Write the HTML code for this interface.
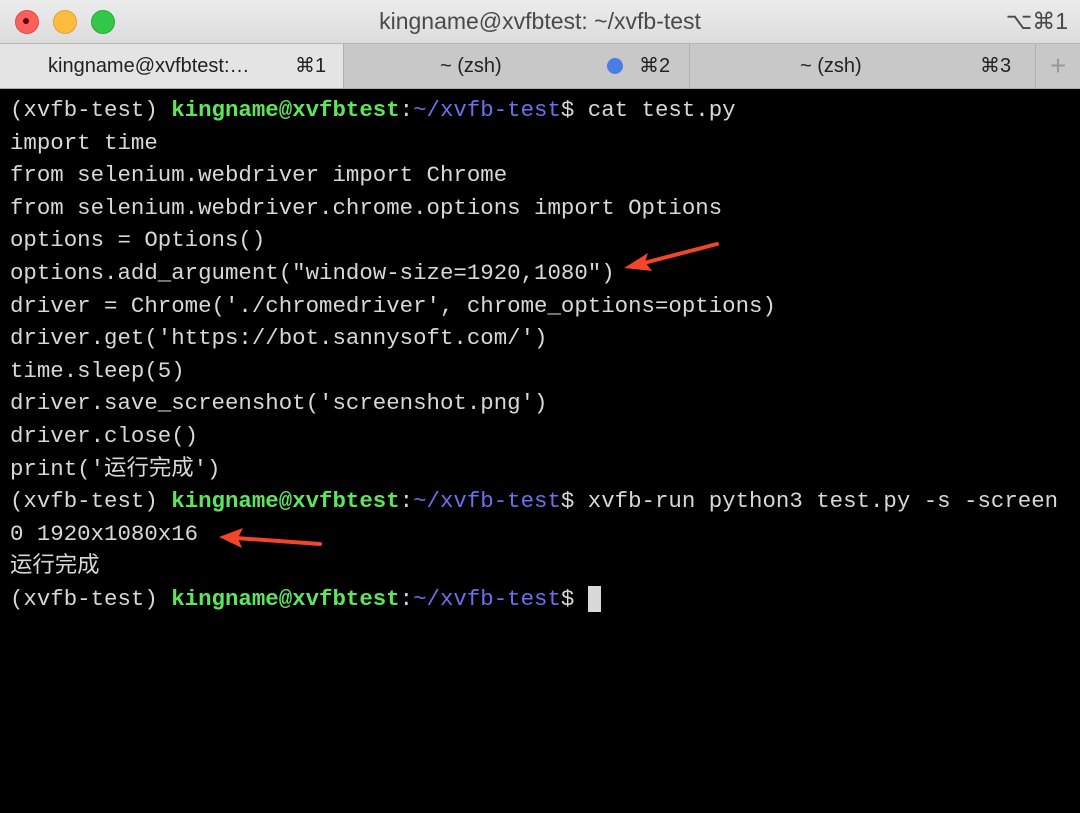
<!DOCTYPE html><html><head><style>
body{margin:0;width:1080px;height:813px;overflow:hidden;background:#000;font-family:"Liberation Sans",sans-serif}
.title{position:absolute;left:0;top:0;width:1080px;height:43px;background:linear-gradient(#ececec,#dcdcdc);text-align:center;line-height:43px;font-size:23px;color:#4a4a4a}
.dot{position:absolute;top:10px;width:22px;height:22px;border-radius:50%}
.tabs{position:absolute;top:43px;left:0;width:1080px;height:44px;background:#c8c8c8;border-top:1px solid #b8b8b8;border-bottom:1px solid #aaa;font-size:20px;color:#222}
.tab{position:absolute;top:0;height:44px;line-height:44px;border-right:1px solid #b0b0b0;box-sizing:border-box}
.term{position:absolute;top:94px;left:10px;font-family:"Liberation Mono","Noto Sans CJK SC",monospace;font-size:22.4px;line-height:32.6px;color:#d8d8d8;white-space:pre}
.g{color:#5ee65a;font-weight:bold}.b{color:#6b70ee}
</style></head><body>
<div class="title">kingname@xvfbtest: ~/xvfb-test<span style="position:absolute;right:12px">⌥⌘1</span></div>
<div class="dot" style="left:15px;background:#fc605c;border:1px solid #de4a45"><div style="width:6px;height:6px;background:#5a0000;border-radius:50%;margin:7px"></div></div>
<div class="dot" style="left:53px;background:#fdbc40;border:1px solid #dea236"></div>
<div class="dot" style="left:91px;background:#34c84a;border:1px solid #27aa35"></div>
<div class="tabs">
<div class="tab" style="left:0;width:344px;background:#e4e4e4"><span style="position:absolute;left:48px">kingname@xvfbtest:…</span><span style="position:absolute;left:295px">⌘1</span></div>
<div class="tab" style="left:344px;width:346px"><span style="position:absolute;left:96px">~ (zsh)</span><span style="position:absolute;left:263px;top:14px;width:16px;height:16px;border-radius:50%;background:#4a7ee6"></span><span style="position:absolute;left:295px">⌘2</span></div>
<div class="tab" style="left:690px;width:346px"><span style="position:absolute;left:110px">~ (zsh)</span><span style="position:absolute;left:290px">⌘3</span></div>
<div class="tab" style="left:1036px;width:44px;border:none;text-align:center;font-size:28px;color:#999">+</div>
</div>
<div class="term">(xvfb-test) <span class="g">kingname@xvfbtest</span>:<span class="b">~/xvfb-test</span>$ cat test.py
import time
from selenium.webdriver import Chrome
from selenium.webdriver.chrome.options import Options
options = Options()
options.add_argument("window-size=1920,1080")
driver = Chrome('./chromedriver', chrome_options=options)
driver.get('https://bot.sannysoft.com/')
time.sleep(5)
driver.save_screenshot('screenshot.png')
driver.close()
print('运行完成')
(xvfb-test) <span class="g">kingname@xvfbtest</span>:<span class="b">~/xvfb-test</span>$ xvfb-run python3 test.py -s -screen
0 1920x1080x16
运行完成
(xvfb-test) <span class="g">kingname@xvfbtest</span>:<span class="b">~/xvfb-test</span>$ <span style="background:#d8d8d8"> </span></div>
<svg style="position:absolute;left:0;top:0" width="1080" height="813">
<path d="M717 244 L640 264" stroke="#f2452a" stroke-width="4" stroke-linecap="round"/>
<path d="M624 268 L648 253 L645 262 L652 271 Z" fill="#f2452a"/>
<path d="M320 544 L236 538" stroke="#f2452a" stroke-width="4" stroke-linecap="round"/>
<path d="M219 537 L243 528 L238 538 L242 548 Z" fill="#f2452a"/>
</svg>
</body></html>
